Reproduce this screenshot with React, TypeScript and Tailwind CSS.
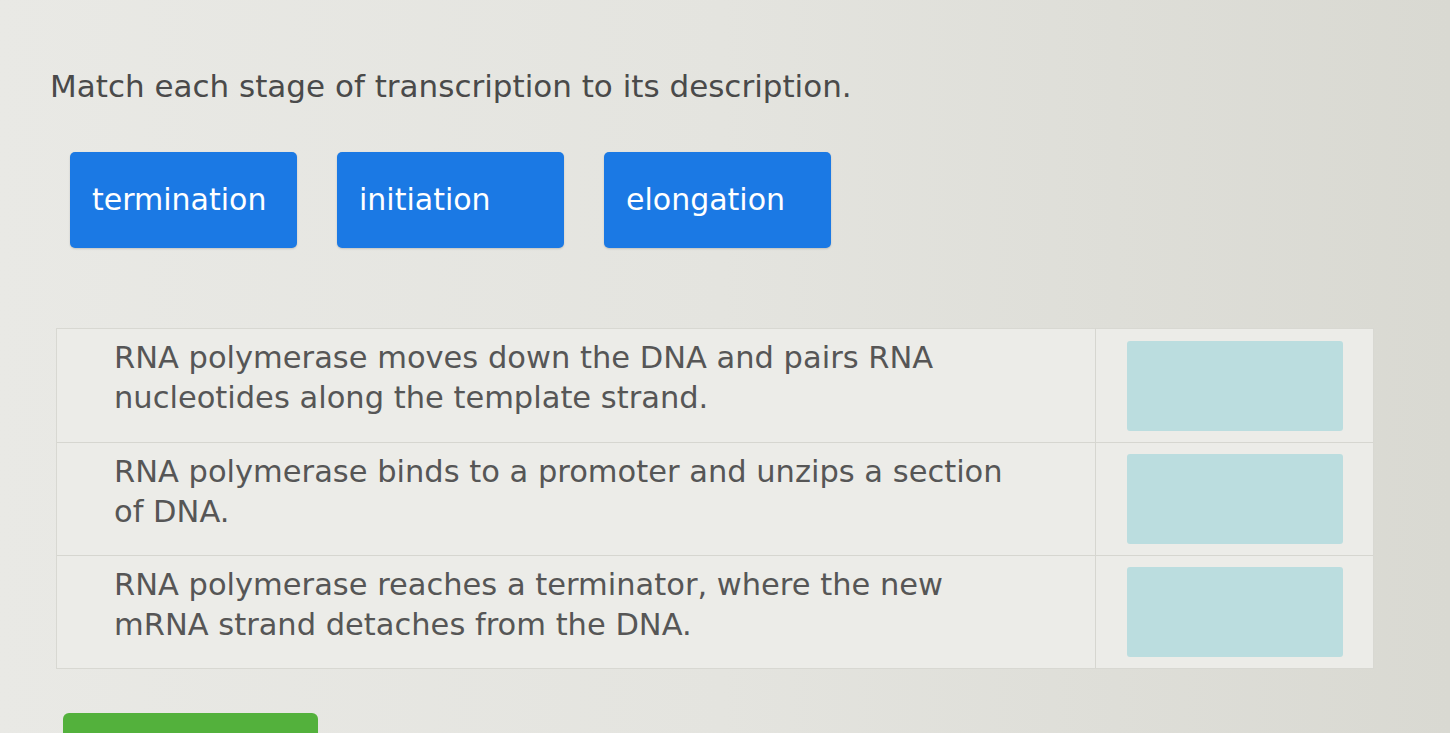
import React from "react";

const stages = ["termination", "initiation", "elongation"];

const rows: string[][] = [
  ["RNA polymerase moves down the DNA and pairs RNA", "nucleotides along the template strand."],
  ["RNA polymerase binds to a promoter and unzips a section", "of DNA."],
  ["RNA polymerase reaches a terminator, where the new", "mRNA strand detaches from the DNA."],
];

export default function App() {
  return (
    <div
      className="w-[1450px] h-[733px] overflow-hidden bg-gradient-to-r from-[#e9e9e5] via-[#e4e4df] to-[#d9d9d2] text-[#4f4f4f]"
      style={{ fontFamily: '"DejaVu Sans", Verdana, sans-serif' }}
    >
      <div className="pl-[50px] pt-[68px]">
        <h1 className="text-[31px] leading-[36px] font-normal text-[#4a4a4a]">
          Match each stage of transcription to its description.
        </h1>

        {/* draggable answer tiles */}
        <div className="flex gap-[40px] pl-[20px] mt-[48px]">
          {stages.map((s) => (
            <div
              key={s}
              className="w-[227px] h-[96px] rounded-[5px] bg-[#1b79e4] flex items-center pl-[22px] pb-[2px] text-white text-[30px] shadow-[0_1px_2px_rgba(0,0,0,0.15)]"
            >
              {s}
            </div>
          ))}
        </div>

        {/* description table with drop targets */}
        <div className="mt-[80px] ml-[6px] w-[1318px] border border-[#d8d8d2] bg-[#ecece8]">
          {rows.map((lines, i) => (
            <div
              key={i}
              className={`flex h-[113px] ${i > 0 ? "border-t border-[#d6d6d0]" : ""}`}
            >
              <div className="w-[1038px] pl-[57px] pt-[9px] text-[30.5px] leading-[40px] text-[#565656]">
                {lines.map((l) => (
                  <div key={l}>{l}</div>
                ))}
              </div>
              <div className="flex-1 border-l border-[#d6d6d0] flex items-center justify-center">
                <div className="w-[216px] h-[90px] rounded-[3px] bg-[#bbdddf]" />
              </div>
            </div>
          ))}
        </div>

        <div className="mt-[44px] ml-[13px] w-[255px] h-[40px] rounded-[6px] bg-[#53b13c]" />
      </div>
    </div>
  );
}
